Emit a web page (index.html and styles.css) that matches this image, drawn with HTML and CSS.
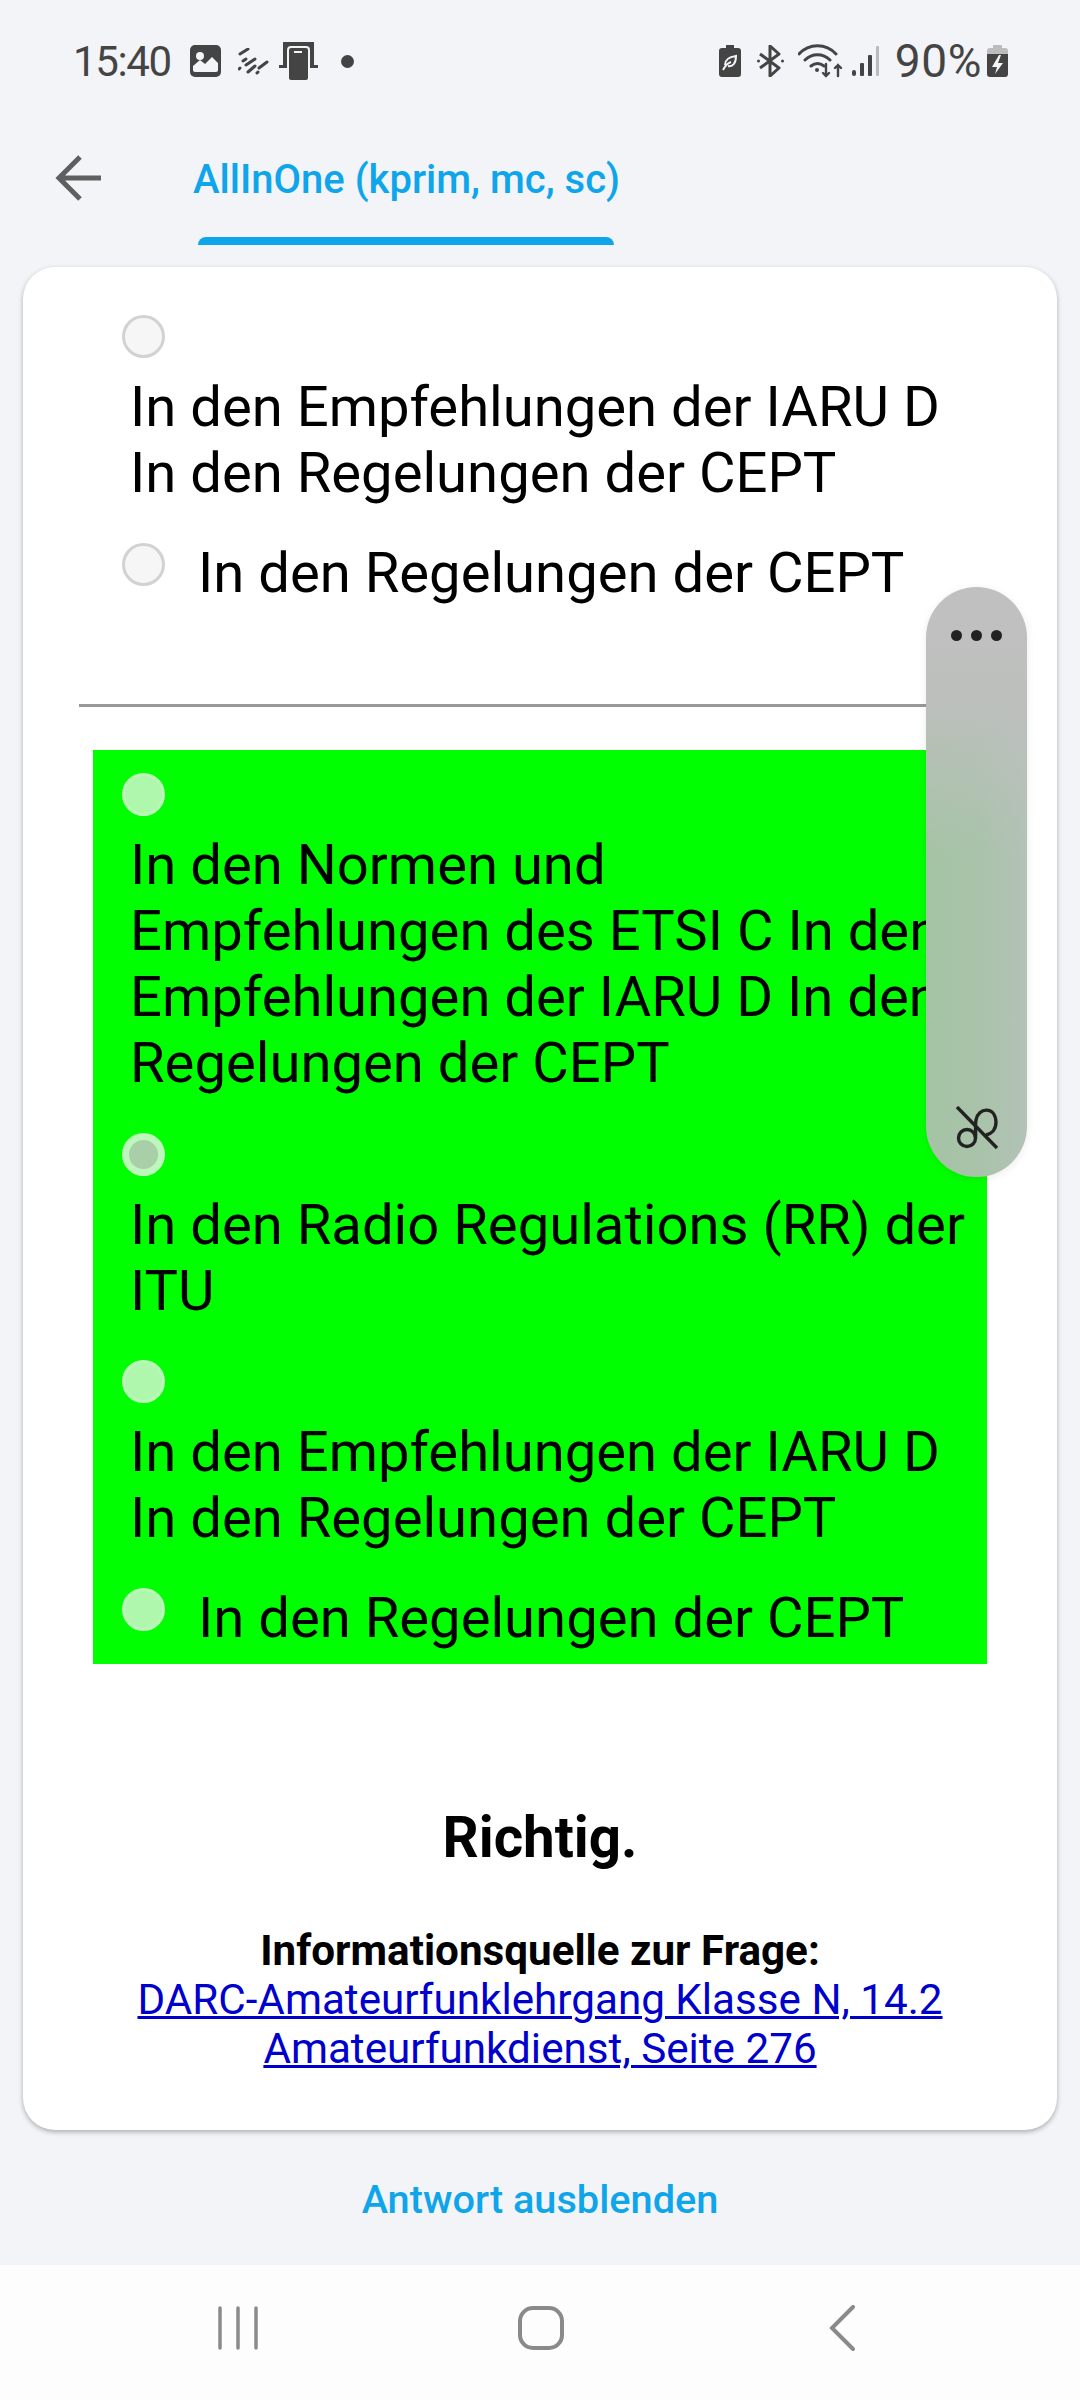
FILE: index.html
```html
<!DOCTYPE html>
<html lang="de">
<head>
    <meta charset="UTF-8">
    <meta name="viewport" content="width=device-width, initial-scale=1.0">
    <title>AllInOne (kprim, mc, sc)</title>
    <link rel="stylesheet" href="styles.css">
</head>
<body>

    <div class="status-bar">
        <span class="clock">15:40</span>
        <svg class="st-icon st-image" width="31" height="32" viewBox="0 0 31 32">
            <rect x="0" y="0" width="31" height="32" rx="5" fill="#444"/>
            <circle cx="10" cy="11" r="4" fill="#f2f4f8"/>
            <path d="M3 25v-4l7-6 5 4 7-7 6 6v7a2 2 0 0 1-2 2H5a2 2 0 0 1-2-2z" fill="#f2f4f8"/>
        </svg>
        <svg class="st-icon st-streak" width="31" height="27" viewBox="0 0 31 27" stroke="#444" stroke-width="3" stroke-linecap="round" fill="none">
            <path d="M2 6l8-5M5 13l3-2M1 21l1-1M8 17l9-6M10 24l7-6M19 25l1-1M21 20l8-6"/>
        </svg>
        <svg class="st-icon st-device" width="39" height="38" viewBox="0 0 39 38">
            <path d="M4 0h31v23H4z" fill="#444"/>
            <rect x="0" y="23" width="39" height="3" fill="#444"/>
            <rect x="9" y="5" width="21" height="34" rx="3" fill="#444" stroke="#f2f4f8" stroke-width="2"/>
            <rect x="15" y="9" width="8" height="2" fill="#f2f4f8"/>
        </svg>
        <span class="dot"></span>
        <span class="status-right">
            <svg class="st-icon" width="22" height="32" viewBox="0 0 22 32">
                <path d="M7 0h8v3h4a3 3 0 0 1 3 3v23a3 3 0 0 1-3 3H3a3 3 0 0 1-3-3V6a3 3 0 0 1 3-3h4z" fill="#444"/>
                <path d="M6 20c0-6 4-8 11-9 0 7-3 11-8 10M4 25c2-4 5-7 8-8" fill="none" stroke="#f2f4f8" stroke-width="2"/>
            </svg>
            <svg class="st-icon bt" width="27" height="32" viewBox="0 0 27 32" fill="none" stroke="#444" stroke-width="3" stroke-linejoin="round">
                <path d="M3 9l19 14-9 8V1l9 8L3 23"/>
                <circle cx="1.5" cy="16" r="1.5" fill="#444" stroke="none"/>
                <circle cx="25.5" cy="16" r="1.5" fill="#444" stroke="none"/>
            </svg>
            <svg class="st-icon wifi" width="45" height="34" viewBox="0 0 45 34" fill="none" stroke="#444" stroke-width="3" stroke-linecap="round">
                <path d="M1 10c10-11 27-11 37 0M7 16c7-7 18-7 25 0M13 22c4-3 9-3 13 0"/>
                <circle cx="19" cy="26" r="2" fill="#444" stroke="none"/>
                <path d="M28 20v12M25 29l3 3 3-3M40 32V21M37 24l3-3 3 3" stroke-width="2.4"/>
            </svg>
            <svg class="st-icon" width="27" height="32" viewBox="0 0 27 32">
                <rect x="0" y="25" width="4" height="6" rx="2" fill="#444"/>
                <rect x="8" y="18" width="4" height="13" rx="1" fill="#444"/>
                <rect x="16" y="10" width="4" height="21" rx="1" fill="#444"/>
                <rect x="24" y="1" width="3" height="30" rx="1" fill="#bbb"/>
            </svg>
            <span class="battery-pct">90%</span>
            <svg class="st-icon batt" width="21" height="32" viewBox="0 0 21 32">
                <path d="M6 0h9v3h3a3 3 0 0 1 3 3v5H0V6a3 3 0 0 1 3-3h3z" fill="#bcbcbc"/>
                <path d="M0 9h21v20a3 3 0 0 1-3 3H3a3 3 0 0 1-3-3z" fill="#444"/>
                <path d="M12 10l-7 12h5l-2 7 8-11h-5l3-8z" fill="#f2f4f8"/>
            </svg>
        </span>
    </div>

    <div class="top-bar">
        <svg class="back" width="46" height="46" viewBox="0 0 46 46" fill="none" stroke="#5f5f5f" stroke-width="5">
            <path d="M25 2L4 23l21 21M4 23h44"/>
        </svg>
        <div class="tab">
            <span class="tab-label">AllInOne (kprim, mc, sc)</span>
            <span class="tab-line"></span>
        </div>
    </div>

    <div class="card">
        <div class="answers">
            <div class="option">
                <span class="radio"></span>
                <p class="answer-text">In den Empfehlungen der IARU D In den Regelungen der CEPT</p>
            </div>
            <div class="option inline">
                <span class="radio"></span>
                <p class="answer-text">In den Regelungen der CEPT</p>
            </div>
        </div>

        <hr class="divider">

        <div class="answers correct">
            <div class="option">
                <span class="radio"></span>
                <p class="answer-text">In den Normen und<br>Empfehlungen des ETSI C In den Empfehlungen der IARU D In den Regelungen der CEPT</p>
            </div>
            <div class="option">
                <span class="radio checked"></span>
                <p class="answer-text">In den Radio Regulations (RR) der ITU</p>
            </div>
            <div class="option">
                <span class="radio"></span>
                <p class="answer-text">In den Empfehlungen der IARU D In den Regelungen der CEPT</p>
            </div>
            <div class="option inline">
                <span class="radio"></span>
                <p class="answer-text">In den Regelungen der CEPT</p>
            </div>
        </div>

        <div class="result">Richtig.</div>

        <div class="source">
            <strong>Informationsquelle zur Frage:</strong><br>
            <a href="#">DARC-Amateurfunklehrgang Klasse N, 14.2 Amateurfunkdienst, Seite 276</a>
        </div>
    </div>

    <div class="toggle-answer">Antwort ausblenden</div>

    <div class="nav-bar">
        <svg width="40" height="44" viewBox="0 0 40 44" stroke="#8a8a8a" stroke-width="3.5" stroke-linecap="round">
            <path d="M2 2v40M20 2v40M38 2v40"/>
        </svg>
        <svg class="nav-home" width="46" height="44" viewBox="0 0 46 44" fill="none" stroke="#8a8a8a" stroke-width="4">
            <rect x="2" y="2" width="42" height="40" rx="13"/>
        </svg>
        <svg width="26" height="46" viewBox="0 0 26 46" fill="none" stroke="#8a8a8a" stroke-width="4" stroke-linecap="round">
            <path d="M24 2L3 23l21 21"/>
        </svg>
    </div>

    <!-- floating window handle, sits over the card -->
    <div class="float-pill">
        <span class="pill-dots"><i></i><i></i><i></i></span>
        <svg width="44" height="44" viewBox="0 0 44 44" fill="none" stroke="#222" stroke-width="3.4">
            <path d="M2 1l40 41"/>
            <circle cx="12" cy="32" r="8.5"/>
            <path d="M20.5 32C21 26 20 20 21 14C23 2 40 -1 41 16C41 24 36 28 31 29"/>
        </svg>
    </div>

</body>
</html>
```

FILE: styles.css
```css
* {
    box-sizing: border-box;
}

body {
    position: relative;
    width: 1080px;
    height: 2400px;
    margin: 0;
    overflow: hidden;
    font-family: 'Roboto', sans-serif;
    background-color: #f2f4f8;
    color: #000;
}

.status-bar {
    display: flex;
    align-items: center;
    height: 122px;
    padding: 0 72px 0 73px;
    color: #444;
}

.clock {
    font-size: 42px;
    letter-spacing: -1.4px;
}

.st-icon {
    flex: none;
}

.st-image {
    margin-left: 19px;
}

.st-streak {
    margin-left: 17px;
}

.st-device {
    margin-left: 10px;
}

.dot {
    width: 13px;
    height: 13px;
    margin-left: 23px;
    border-radius: 50%;
    background-color: #444;
}

.status-right {
    display: flex;
    align-items: center;
    margin-left: auto;
}

.status-right .st-icon {
    margin-left: 15px;
}

.status-right .bt {
    margin-left: 16px;
}

.status-right .wifi {
    margin-left: 14px;
}

.status-right .wifi + .st-icon {
    margin-left: 9px;
}

.status-right .batt {
    margin-left: 5px;
}

.battery-pct {
    font-size: 46px;
    letter-spacing: 0.6px;
    margin-left: 16px;
}

.top-bar {
    display: flex;
    height: 145px;
    padding-left: 55px;
}

.back {
    margin-top: 33px;
    flex: none;
}

.tab {
    display: flex;
    flex-direction: column;
    align-items: center;
    margin-left: 92px;
    padding-top: 36px;
}

.tab-label {
    font-size: 40px;
    font-weight: 500;
    line-height: 44px;
    color: #0ea5ea;
}

.tab-line {
    width: 416px;
    height: 8px;
    margin: 35px 2px 0 0;
    border-radius: 8px 8px 0 0;
    background-color: #0ea5ea;
}

.card {
    width: 1034px;
    height: 1863px;
    margin-left: 23px;
    padding: 48px 70px 0;
    border-radius: 32px;
    background-color: #fff;
    box-shadow: 0 2px 5px rgba(0, 0, 0, 0.3);
}

.answers {
    padding: 0 0 15px 29px;
}

.correct {
    padding-top: 23px;
    background-color: #00ff00;
}

.option {
    margin-bottom: 36.5px;
}

.option:last-child {
    margin-bottom: 0;
}

.radio {
    display: block;
    flex: none;
    width: 43px;
    height: 43px;
    border: 3px solid #d2d2d2;
    border-radius: 50%;
    background-color: #f6f6f6;
}

.correct .radio {
    border-color: #bcf7ba;
    background-color: #b0f7ae;
}

.correct .radio.checked {
    border: 7px solid #bdf7bb;
    background-color: #a9cfa8;
}

.answer-text {
    margin: 16px 0 0 8px;
    font-size: 56.2px;
    line-height: 66px;
}

.inline {
    display: flex;
}

.inline .answer-text {
    margin: -3px 0 -1.5px 33px;
}

.divider {
    height: 3px;
    margin: 85px -14px 43px -14px;
    border: 0;
    background-color: #999;
}

.result {
    margin-top: 144px;
    font-size: 56.5px;
    font-weight: 700;
    line-height: 60px;
    text-align: center;
}

.source {
    margin-top: 58px;
    font-size: 42.2px;
    line-height: 49px;
    text-align: center;
}

.source a {
    color: #0000cd;
    text-decoration-thickness: 3px;
}

.toggle-answer {
    margin-top: 48px;
    font-size: 39.7px;
    font-weight: 500;
    line-height: 44px;
    text-align: center;
    color: #0ea5ea;
}

.nav-bar {
    position: absolute;
    left: 0;
    right: 0;
    bottom: 0;
    display: flex;
    align-items: center;
    justify-content: space-between;
    height: 135px;
    padding: 0 225px 9px 218px;
    background-color: #fdfdfd;
}

.nav-home {
    margin-right: 6px;
}

.float-pill {
    position: absolute;
    left: 926px;
    top: 587px;
    display: flex;
    flex-direction: column;
    align-items: center;
    justify-content: space-between;
    width: 101px;
    height: 590px;
    padding: 43px 0 27px;
    border-radius: 51px;
    background:
        linear-gradient(180deg, #c0c0c0 0%, #bdbfbd 18%, rgba(189, 191, 189, 0) 45%),
        linear-gradient(90deg, #a5c3a5 0%, #a8c3a9 50%, #b3c2b7 100%);
    box-shadow: 0 2px 8px rgba(0, 0, 0, 0.08);
}

.pill-dots {
    display: flex;
    gap: 9px;
}

.pill-dots i {
    width: 11px;
    height: 11px;
    border-radius: 50%;
    background-color: #222;
}
```
